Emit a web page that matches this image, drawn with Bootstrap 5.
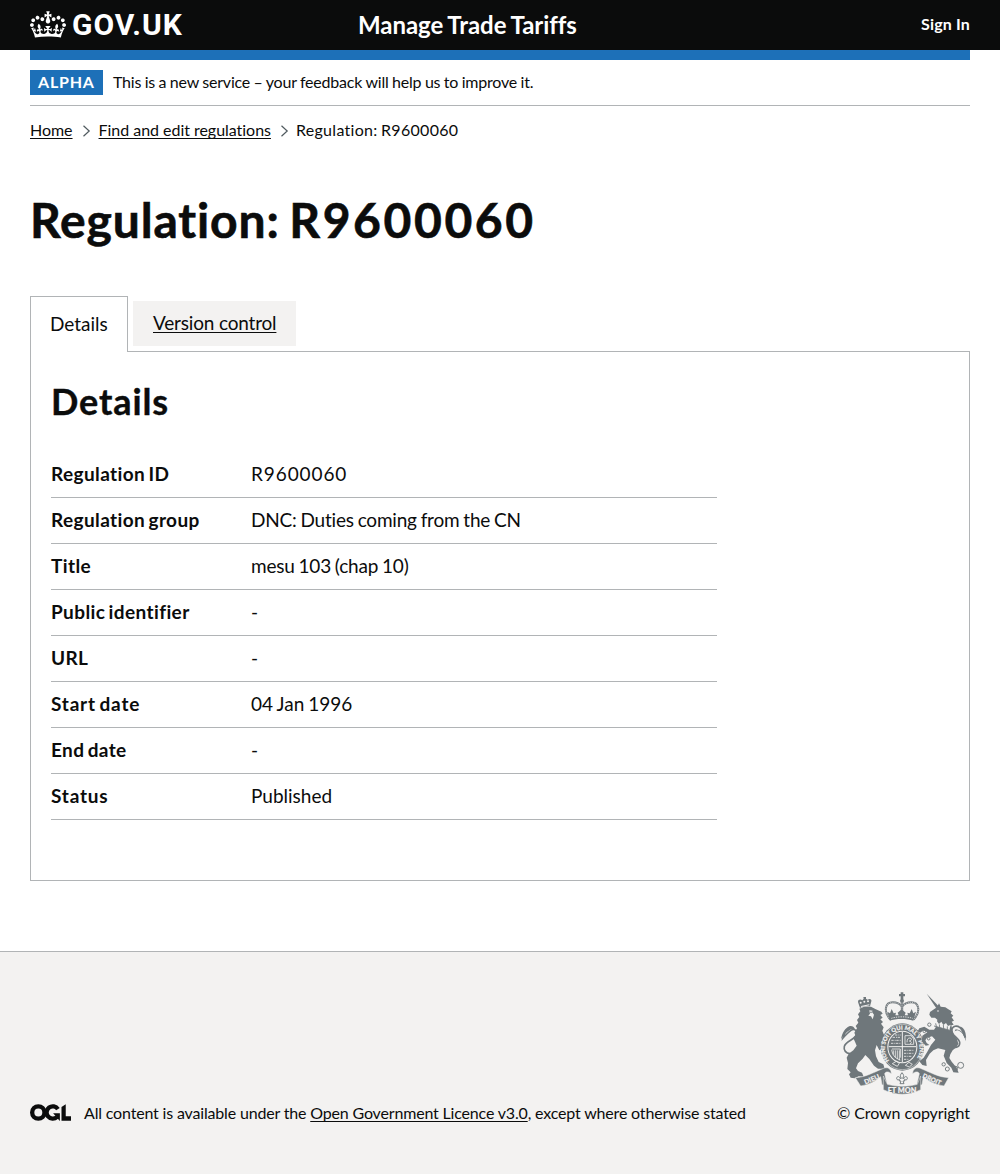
<!DOCTYPE html>
<html lang="en">
<head>
<meta charset="utf-8">
<meta name="viewport" content="width=device-width, initial-scale=1">
<title>Regulation: R9600060 - Manage Trade Tariffs</title>
<link href="https://cdn.jsdelivr.net/npm/bootstrap@5.3.0/dist/css/bootstrap.min.css" rel="stylesheet">
<style>
  :root { --ink: #0b0c0c; --line: #b1b4b6; --pale: #f3f2f1; --brand: #1d70b8; }
  body { font-family: Lato, "Noto Sans", sans-serif; font-size: 16px; line-height: 20px; color: var(--ink); background: var(--pale); font-variant-ligatures: none; }
  a, a:hover { color: var(--ink); text-underline-offset: 2px; text-decoration-thickness: 1px; text-decoration-skip-ink: none; }
  .page-width { max-width: 1000px; padding-left: 30px; padding-right: 30px; }
  .site-header { background: var(--ink); height: 50px; padding-bottom: 2px; }
  .site-header a { color: #fff; text-decoration: none; }
  .logo-col { width: 328px; }
  .logo-text { font: 700 30px/30px Roboto, Arial, sans-serif; letter-spacing: 1px; margin: 1px 0 0 6px; }
  .service-name { font-size: 24px; line-height: 30px; letter-spacing: -.05px; word-spacing: -1px; padding-top: 1px; }
  .sign-in { letter-spacing: .17px; }
  .brand-bar { height: 10px; background: var(--brand); }
  .phase { height: 46px; border-bottom: 1px solid var(--line); }
  .phase-tag { background: var(--brand); color: #fff; height: 25px; line-height: 24px; width: 73px; letter-spacing: .8px; padding-left: 8px; margin-right: 10px; }
  .phase-text { letter-spacing: -.2px; word-spacing: -.4px; padding-bottom: 2px; }
  .crumbs { padding-top: 14px; letter-spacing: -.03px; }
  .crumbs svg { margin: 2px 8px 0 9px; }
  .crumb-here { letter-spacing: .3px; word-spacing: -1px; margin-left: -1px; }
  .title-xl { font-size: 48px; line-height: 50px; letter-spacing: .85px; word-spacing: -3px; margin: 55px 0 51px; -webkit-text-stroke: .6px var(--ink); }
  .title-xl span { letter-spacing: 2.6px; }
  .tab-strip { height: 55px; font-size: 19px; line-height: 25px; letter-spacing: -.18px; }
  .tab-on { border: 1px solid var(--line); border-bottom: 0; background: #fff; width: 98px; height: 56px; padding: 14px 0 0 19px; margin-right: 5px; z-index: 1; letter-spacing: 0; }
  .tab-off { background: var(--pale); width: 163px; height: 45px; padding: 9px 0 11px 20px; margin-top: 5px; white-space: nowrap; }
  .panel { border: 1px solid var(--line); padding: 29px 20px; height: 530px; }
  .title-l { font-size: 36px; line-height: 40px; letter-spacing: .9px; margin-bottom: 31px; -webkit-text-stroke: .4px var(--ink); }
  .summary { width: 666px; font-size: 19px; line-height: 25px; }
  .summary > div { border-bottom: 1px solid var(--line); padding: 9px 0 11px; }
  .summary dt { width: 200px; letter-spacing: .4px; word-spacing: -1.8px; }
  .summary .wider { letter-spacing: .8px; }
  .summary dd { letter-spacing: -.2px; word-spacing: -.8px; }
  .summary .digits { letter-spacing: .9px; }
  .summary .near { letter-spacing: 0; }
  .site-main { background: #fff; padding-bottom: 70px; }
  .site-footer { background: var(--pale); border-top: 1px solid var(--line); height: 223px; padding-top: 38px; }
  .licence { letter-spacing: -.17px; padding-bottom: 1px; }
  .licence svg { margin: 0 13px 2px 0; }
  .crest { letter-spacing: -.07px; padding-bottom: 1px; }
  .crest svg { margin: 0 2px 8px 0; }
  .crest text { font-family: Lato, sans-serif; font-weight: 900; fill: #f3f2f1; stroke: #f3f2f1; stroke-width: .5px; letter-spacing: 0; }
</style>
</head>
<body>
<header class="site-header">
  <div class="container-fluid page-width d-flex align-items-center h-100 mx-auto">
    <a href="#" class="logo-col d-flex align-items-center">
      <svg width="36" height="27" viewBox="0 0 132 97" fill="#fff" aria-hidden="true"><path d="M25 30.2c3.5 1.5 7.7-.2 9.1-3.7 1.5-3.6-.2-7.8-3.9-9.2-3.6-1.4-7.6.3-9.1 3.9-1.4 3.5.3 7.5 3.9 9zM9 39.5c3.6 1.5 7.8-.2 9.2-3.7 1.5-3.6-.2-7.8-3.9-9.1-3.6-1.5-7.6.2-9.1 3.8-1.4 3.5.3 7.5 3.8 9zM4.4 57.2c3.5 1.5 7.7-.2 9.1-3.8 1.5-3.6-.2-7.7-3.9-9.1-3.5-1.5-7.6.3-9.1 3.8-1.4 3.5.3 7.6 3.9 9.1zm38.3-21.4c3.5 1.5 7.7-.2 9.1-3.8 1.5-3.6-.2-7.7-3.9-9.1-3.6-1.5-7.6.3-9.1 3.8-1.3 3.6.4 7.7 3.9 9.1zm64.4-5.6c-3.6 1.5-7.8-.2-9.1-3.7-1.5-3.6.2-7.8 3.8-9.2 3.6-1.4 7.7.3 9.2 3.9 1.3 3.5-.4 7.5-3.9 9zm15.9 9.3c-3.6 1.5-7.7-.2-9.1-3.7-1.5-3.6.2-7.8 3.7-9.1 3.6-1.5 7.7.2 9.2 3.8 1.5 3.5-.3 7.5-3.8 9zm4.7 17.7c-3.6 1.5-7.8-.2-9.2-3.8-1.5-3.6.2-7.7 3.9-9.1 3.6-1.5 7.7.3 9.2 3.8 1.3 3.5-.4 7.6-3.9 9.1zM89.3 35.8c-3.6 1.5-7.8-.2-9.2-3.8-1.4-3.6.2-7.7 3.9-9.1 3.6-1.5 7.7.3 9.2 3.8 1.4 3.6-.3 7.7-3.9 9.1zM69.7 17.7l8.9 4.7V9.3l-8.9 2.8c-.2-.3-.5-.6-.9-.9L72.4 0H59.6l3.5 11.2c-.3.3-.6.5-.9.9l-8.8-2.8v13.1l8.8-4.7c.3.3.6.7.9.9l-5 15.4v.1c-.2.8-.4 1.6-.4 2.4 0 4.1 3.1 7.5 7 8.1h.2c.3 0 .7.1 1 .1.4 0 .7 0 1-.1h.2c4-.6 7.1-4.1 7.1-8.1 0-.8-.1-1.7-.4-2.4V34l-5.1-15.4c.4-.2.7-.6 1-.9zM66 92.8c16.9 0 32.8 1.1 47.1 3.2 4-16.9 8.9-26.7 14-33.5l-9.6-3.4c1 4.9 1.1 7.2 0 10.2-1.5-1.4-3-4.3-4.2-8.7L108.6 76c2.8-2 5-3.2 7.5-3.3-4.4 9.4-10 11.9-13.6 11.2-4.3-.8-6.3-4.6-5.6-7.9 1-4.7 5.7-5.9 8-.5 4.3-8.7-3-11.4-7.6-8.8 7.1-7.2 7.9-13.5 2.1-21.1-8 6.1-8.1 12.3-4.5 20.8-4.7-5.4-12.1-2.5-9.5 6.2 3.4-5.2 7.9-2 7.2 3.1-.6 4.3-6.4 7.8-13.5 7.2-10.3-.9-10.9-8-11.2-13.8 2.5-.5 7.1 1.8 11 7.3L80.2 60c-4.1 4.4-8 5.3-12.3 5.4 1.4-4.4 8-11.6 8-11.6H55.5s6.4 7.2 7.9 11.6c-4.2-.1-8-1-12.3-5.4l1.4 16.4c3.9-5.5 8.5-7.7 10.9-7.3-.3 5.8-.9 12.8-11.1 13.8-7.2.6-12.9-2.9-13.5-7.2-.7-5 3.8-8.3 7.1-3.1 2.7-8.7-4.6-11.6-9.4-6.2 3.7-8.5 3.6-14.7-4.6-20.8-5.8 7.6-5 13.9 2.2 21.1-4.7-2.6-11.9.1-7.7 8.8 2.3-5.5 7.1-4.2 8.1.5.7 3.3-1.3 7.1-5.7 7.9-3.5.7-9-1.8-13.5-11.2 2.5.1 4.7 1.3 7.5 3.3l-4.7-15.4c-1.2 4.4-2.7 7.2-4.3 8.7-1.1-3-.9-5.3 0-10.2l-9.5 3.4c5 6.9 9.9 16.7 14 33.5 14.8-2.1 30.8-3.2 47.7-3.2z"/></svg>
      <span class="logo-text">GOV.UK</span>
    </a>
    <a href="#" class="service-name fw-bold">Manage Trade Tariffs</a>
    <a href="#" class="sign-in fw-bold ms-auto">Sign In</a>
  </div>
</header>

<div class="site-main">
  <div class="container-fluid page-width mx-auto">
    <div class="brand-bar"></div>
    <div class="phase d-flex align-items-center">
      <strong class="phase-tag">ALPHA</strong>
      <span class="phase-text">This is a new service – your feedback will help us to improve it.</span>
    </div>
    <nav class="crumbs d-flex align-items-center" aria-label="Breadcrumb">
      <a href="#">Home</a>
      <svg width="9" height="12" viewBox="0 0 9 12" fill="none" stroke="#505a5f" stroke-width="1.2"><path d="M1.5.8 7.2 6 1.5 11.2"/></svg>
      <a href="#">Find and edit regulations</a>
      <svg width="9" height="12" viewBox="0 0 9 12" fill="none" stroke="#505a5f" stroke-width="1.2"><path d="M1.5.8 7.2 6 1.5 11.2"/></svg>
      <span class="crumb-here">Regulation: R9600060</span>
    </nav>
    <main>
      <h1 class="title-xl fw-bold">Regulation: <span>R9600060</span></h1>
      <div class="tab-strip d-flex align-items-start">
        <div class="tab-on position-relative">Details</div>
        <a href="#" class="tab-off">Version control</a>
      </div>
      <section class="panel">
        <h2 class="title-l fw-bold">Details</h2>
        <dl class="summary mb-0">
          <div class="d-flex"><dt>Regulation ID</dt><dd class="digits mb-0">R9600060</dd></div>
          <div class="d-flex"><dt>Regulation group</dt><dd class="mb-0">DNC: Duties coming from the CN</dd></div>
          <div class="d-flex"><dt>Title</dt><dd class="mb-0">mesu 103 (chap 10)</dd></div>
          <div class="d-flex"><dt>Public identifier</dt><dd class="mb-0">-</dd></div>
          <div class="d-flex"><dt>URL</dt><dd class="mb-0">-</dd></div>
          <div class="d-flex"><dt class="wider">Start date</dt><dd class="near mb-0">04 Jan 1996</dd></div>
          <div class="d-flex"><dt>End date</dt><dd class="mb-0">-</dd></div>
          <div class="d-flex"><dt class="wider">Status</dt><dd class="near mb-0">Published</dd></div>
        </dl>
      </section>
    </main>
  </div>
</div>

<footer class="site-footer">
  <div class="container-fluid page-width mx-auto d-flex justify-content-between align-items-end">
    <div class="licence d-flex align-items-center">
      <svg width="41" height="17" viewBox="0 0 483 196" fill="none" stroke="#0b0c0c" stroke-width="51" role="img" aria-label="OGL"><circle cx="98" cy="98" r="72.5"/><path d="M329 59A72.5 72.5 0 1 0 318 151"/><path fill="#0b0c0c" stroke="none" d="M272 106h80v88h-4l-52-60zM371 32 421 0v143h62v51H371z"/></svg>
      <span>All content is available under the <a href="#">Open Government Licence v3.0</a>, except where otherwise stated</span>
    </div>
    <div class="crest d-flex flex-column align-items-end">
      <svg width="128" height="105" viewBox="30 30 384 315" fill="#6f777b" aria-hidden="true">
        <defs><path id="motto" d="M178 242A52 56 0 1 1 256 242"/></defs>
        <!-- lion -->
        <path d="M90 84 84 66c0-8 8-9 13-5l4-5-1-5h8l0 5 5 3c6-5 13-1 11 5l-4 15c-9-2-19 0-30 5z"/>
        <g fill="#f3f2f1"><circle cx="92" cy="68" r="3"/><circle cx="103" cy="65" r="3"/><circle cx="114" cy="64" r="3"/><path d="M93 78l25-5v3l-24 5z"/></g>
        <path transform="translate(24 27)" d="M64 59Q80 50 99 53L112 60 130 68 134 74 127 78 134 86 127 91 135 99 129 104 137 115 133 125 139 140 143 158 137 168 130 160 134 178 124 184 116 168 111 184 114 202 122 219 136 226 140 239 120 239 108 230 94 210 82 198 74 209 60 223 54 238 60 246 72 251 77 263 62 262 50 268 38 266 33 256 38 250 28 240 30 222 26 206 32 194 46 184 56 170 51 158 46 148 52 139 49 131 57 118 53 111 61 101 57 93 64 84 60 76 67 67z"/>
        <path d="M118 91l10 1-2 4 6 8-4 14-5-9-8-2 5-6z" fill="#f3f2f1"/>
        <circle cx="123" cy="97" r="2.5"/>
        <path d="M60 221c-12-1-20-10-17-22 4-16 37-22 38-39 0-11-11-14-18-9-9 6-16 14-24 23 4-18 11-29 24-33" fill="none" stroke="#6f777b" stroke-width="5"/>
        <path d="M33 178c3-20 12-34 27-40 8-1 14 5 15 10-9-4-17 2-24 8-8 7-11 12-18 22z"/>
        <!-- royal crown -->
        <path d="M212 37h8v5h5v7h-5v8h-8v-8h-5v-7h5z"/><circle cx="216" cy="62" r="6"/>
        <path d="M181 119c-22-27-15-52 7-52 13 0 23 6 28 13 5-7 15-13 28-13 22 0 30 25 7 52" fill="none" stroke="#6f777b" stroke-width="6"/>
        <path d="M181 119c-22-27-15-52 7-52 13 0 23 6 28 13 5-7 15-13 28-13 22 0 30 25 7 52" fill="none" stroke="#f3f2f1" stroke-width="2" stroke-dasharray="3 3"/>
        <path d="M216 66v26" stroke="#6f777b" stroke-width="7"/><path d="M216 68v22" stroke="#f3f2f1" stroke-width="2.5" stroke-dasharray="3 3"/>
        <path d="M180 122l-8-27 8 5 5-13 6 13 7-2-2 8 10 0-3-8 12-10 12 10-3 8h10l-2-8 7 2 6-13 5 13 8-5-8 27c-20-7-52-7-72 0z"/>
        <path d="M184 115c18-6 46-6 64 0" fill="none" stroke="#f3f2f1" stroke-width="2.5" stroke-dasharray="4 3"/>
        <!-- garter and shield -->
        <ellipse cx="217" cy="201" rx="65" ry="71"/>
        <ellipse cx="217" cy="201" rx="62" ry="68" fill="none" stroke="#f3f2f1" stroke-width="1.5"/>
        <ellipse cx="217" cy="201" rx="45" ry="49" fill="#f3f2f1"/>
        <ellipse cx="217" cy="201" rx="42" ry="46"/>
        <text font-size="17" stroke-width="0"><textPath href="#motto" textLength="240" lengthAdjust="spacingAndGlyphs">HONI SOIT QUI MAL Y PENSE</textPath></text>
        <path d="M217 156v90M176 200h82" stroke="#f3f2f1" stroke-width="3"/>
        <g fill="none" stroke="#f3f2f1" stroke-width="2.4"><path d="M184 181h28M188 172h24M195 165h17M183 190h29M222 211h30M222 220h28M222 229h22M222 238h14" stroke-dasharray="7 3 3 2"/><path d="M225 167h18l8 10v16h-26zM231 187c0-10 4-14 9-13 8 1 4 9-2 9 8 1 7 8 2 8M186 207h25v26M190 211l0 13M196 211v22M202 211v26M208 211v30M185 209c2 14 9 26 26 31"/></g>
        <path d="M187 251l12-7 9 6-6 9zM226 256l11-9 10 6-9 8z" fill="none" stroke="#f3f2f1" stroke-width="2.5"/>
        <!-- unicorn -->
        <g transform="translate(24 27)">
        <path d="M266 14 302 52 295 58z"/>
        <path d="M274 77 276 69 289 60 297 55 303 43 308 53 322 55 331 61 341 67 338 73 346 80 341 85 348 95 341 98 347 107 340 109 343 122 348 138 357 150 361 164 356 174 344 184 337 196 334 207 344 223 355 234 362 251 346 250 340 236 326 222 317 200 322 183 300 178 286 184 275 194 264 213 266 231 253 228 244 217 257 206 268 188 279 168 292 152 282 142 267 146 262 154 266 162 274 168 263 170 251 157 253 140 268 130 256 124 247 131 239 127 244 118 259 113 274 122 288 122 294 113 298 92 291 86 280 86z"/>
        <path d="M285 99l7 4 4-8 7 10 7-7 6 10 8-6 6 9 8-4-4 17-46-14z" fill="#f3f2f1"/><path d="M288 111l45 12M293 103l2 9M304 106l1 9M316 108l1 10M328 112l0 10" fill="none" stroke="#6f777b" stroke-width="2.6"/>
        <circle cx="300" cy="66" r="2.5" fill="#f3f2f1"/>
        </g>
        <path d="M368 200c10 6 22 0 21-13-2-14-27-22-24-37 3-13 16-14 24-8 8 6 11 17 17 31-1-19-7-28-15-31" fill="none" stroke="#6f777b" stroke-width="5"/>
        <path d="M407 184c-4-17-11-29-25-33l-8 3 3-6c11 1 17 5 23 12 6 8 8 15 7 24z"/>
        <g fill="none" stroke="#6f777b" stroke-width="2.8"><circle cx="298" cy="134" r="5"/><circle cx="283" cy="154" r="4"/><circle cx="296" cy="176" r="4"/><circle cx="341" cy="253" r="5"/><circle cx="352" cy="267" r="6"/><circle cx="365" cy="253" r="4"/><circle cx="377" cy="265" r="6"/><circle cx="392" cy="256" r="9"/></g>
        <!-- motto scroll -->
        <g stroke="#f3f2f1" stroke-width="1.5">
        <path d="M76 293C105 292 132 277 156 267 172 258 184 266 184 281 175 273 166 275 164 281L173 319 156 314 152 290C135 304 118 314 92 318z"/>
        <path d="M356 293C327 292 300 277 276 267 260 258 248 266 248 281 257 273 266 275 268 281L259 319 276 314 280 290C297 304 316 314 342 318z"/>
        <path d="M160 288 172 313C202 321 232 321 262 313L272 288V329C236 347 198 347 160 329z"/>
        </g>
        <text font-size="20" text-anchor="middle" transform="translate(128 304) rotate(-24)">DIEU</text>
        <text font-size="22" text-anchor="middle" x="216" y="338">ET MON</text>
        <text font-size="19" text-anchor="middle" transform="translate(303 304) rotate(24)">DROIT</text>
        <path d="M216 278c-6 7-6 10-2 17h-4c-1-8-11-6-10 1 1 5 6 4 8 2v5h5l-3 8h12l-3-8h5v-5c2 2 7 3 8-2 1-7-9-9-10-1h-4c4-7 4-10-2-17z" fill="none" stroke="#6f777b" stroke-width="2.8"/>
      </svg>
      <span>© Crown copyright</span>
    </div>
  </div>
</footer>
<script src="https://cdn.jsdelivr.net/npm/bootstrap@5.3.0/dist/js/bootstrap.bundle.min.js"></script>
</body>
</html>
